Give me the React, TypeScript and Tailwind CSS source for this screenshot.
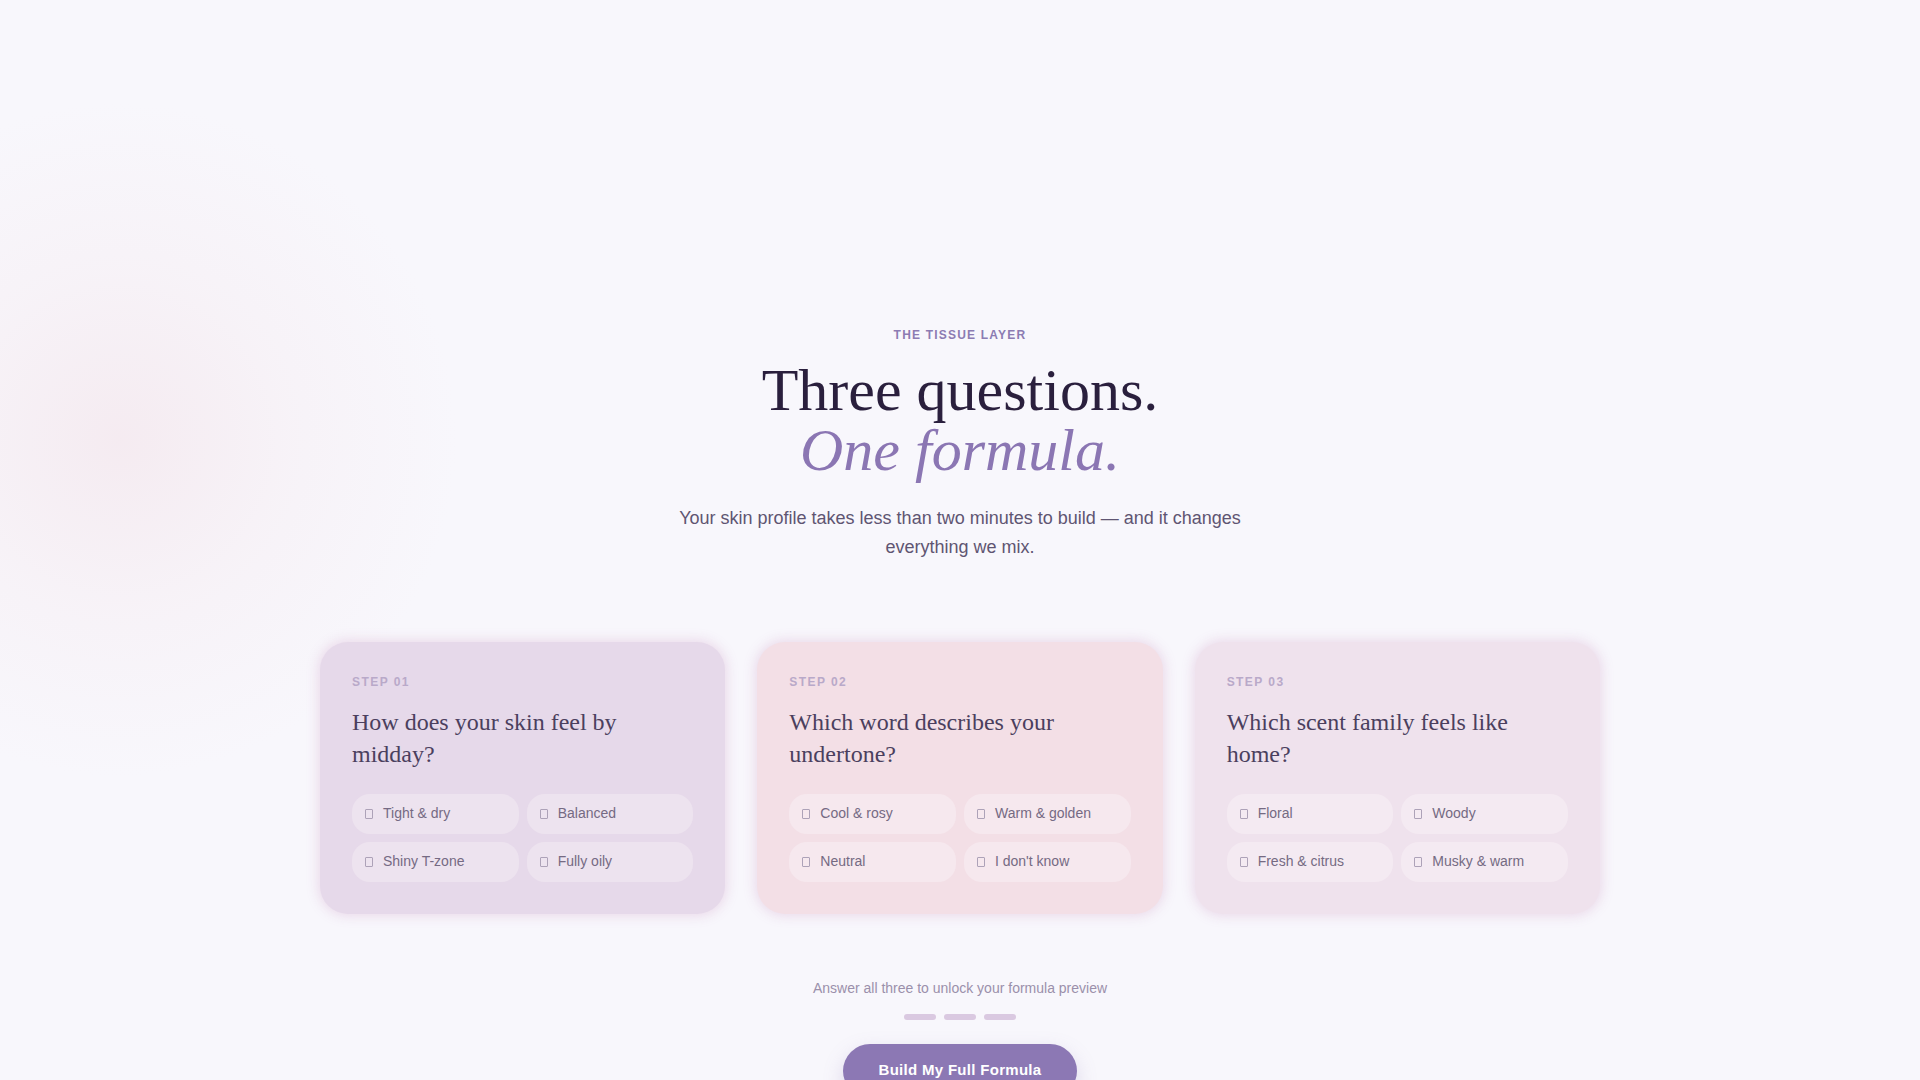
import React from "react";

interface StepCard {
  step: string;
  question: string;
  options: string[];
  cardBg: string;
  pillBg: string;
}

const steps: StepCard[] = [
  {
    step: "STEP 01",
    question: "How does your skin feel by midday?",
    options: ["Tight & dry", "Balanced", "Shiny T-zone", "Fully oily"],
    cardBg: "bg-[#e6d9ea]",
    pillBg: "bg-[#ede3ef]",
  },
  {
    step: "STEP 02",
    question: "Which word describes your undertone?",
    options: ["Cool & rosy", "Warm & golden", "Neutral", "I don't know"],
    cardBg: "bg-[#f3dfe6]",
    pillBg: "bg-[#f6e8ee]",
  },
  {
    step: "STEP 03",
    question: "Which scent family feels like home?",
    options: ["Floral", "Woody", "Fresh & citrus", "Musky & warm"],
    cardBg: "bg-[#efe2ed]",
    pillBg: "bg-[#f4eaf2]",
  },
];

function QuestionCard({ card }: { card: StepCard }) {
  return (
    <div
      className={`${card.cardBg} rounded-[28px] p-8 shadow-[0_0_12px_2px_rgba(232,212,230,0.85)]`}
    >
      <p className="text-[12px] leading-4 font-bold tracking-[0.12em] text-[#b9a9c9]">
        {card.step}
      </p>
      <h3 className="mt-4 font-['Liberation_Serif',serif] text-[24px] leading-8 text-[#4b3f5e]">
        {card.question}
      </h3>
      <div className="mt-6 grid grid-cols-2 gap-2">
        {card.options.map((opt) => (
          <button
            key={opt}
            className={`${card.pillBg} flex h-10 items-center gap-2.5 rounded-[18px] px-[13px] text-left text-[14px] text-[#756a83]`}
          >
            <span className="h-[10px] w-2 rounded-[1px] border border-[#ada2b8]" />
            {opt}
          </button>
        ))}
      </div>
    </div>
  );
}

export default function App() {
  return (
    <div className="relative min-h-screen overflow-hidden bg-[#f8f7fc] font-['Liberation_Sans',Arial,sans-serif]">
      {/* faint blush glow on the left */}
      <div className="pointer-events-none absolute left-[-220px] top-[100px] h-[680px] w-[680px] rounded-full bg-[radial-gradient(circle,rgba(244,232,238,0.8)_0%,rgba(246,238,243,0.5)_35%,rgba(248,247,252,0)_70%)]" />

      <section className="relative flex flex-col items-center px-8 pt-[327px] pb-24">
        <p className="text-[12px] leading-4 font-bold tracking-[0.1em] text-[#8c7cb3]">
          THE TISSUE LAYER
        </p>
        <h2 className="mt-[17px] text-center font-['Liberation_Serif',serif] text-[60px] leading-[60px] text-[#2a1f3d]">
          Three questions.
          <br />
          <em className="text-[#8b76b3]">One formula.</em>
        </h2>
        <p className="mt-6 max-w-[600px] text-center text-[18px] leading-[28.8px] text-[#5f5572]">
          Your skin profile takes less than two minutes to build — and it changes everything we
          mix.
        </p>

        <div className="mt-[80px] grid w-full max-w-[1280px] grid-cols-3 gap-8">
          {steps.map((card) => (
            <QuestionCard key={card.step} card={card} />
          ))}
        </div>

        <p className="mt-16 text-[14px] leading-5 text-[#9b90ab]">
          Answer all three to unlock your formula preview
        </p>
        <div className="mt-4 flex gap-2">
          <span className="h-1.5 w-8 rounded-full bg-[#dac9e1]" />
          <span className="h-1.5 w-8 rounded-full bg-[#dac9e1]" />
          <span className="h-1.5 w-8 rounded-full bg-[#dac9e1]" />
        </div>
        <button className="mt-6 h-[54px] rounded-full bg-[#8c78b4] px-9 text-[15px] font-bold tracking-[0.02em] text-white shadow-[0_8px_20px_rgba(140,120,180,0.25)]">
          Build My Full Formula
        </button>
      </section>
    </div>
  );
}
